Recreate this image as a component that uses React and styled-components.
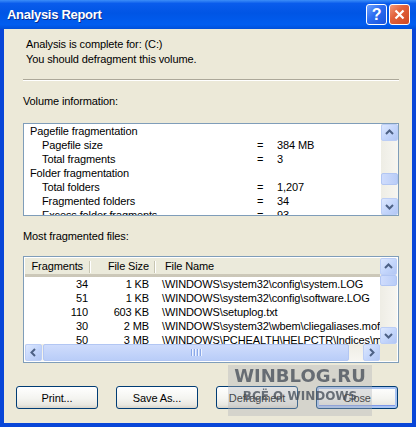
import React from 'react';
import styled, { createGlobalStyle } from 'styled-components';

const GlobalStyle = createGlobalStyle`
  html, body {
    margin: 0;
    padding: 0;
    background: #ffffff;
  }
  body {
    font-family: "Liberation Sans", Arial, sans-serif;
    font-size: 11px;
    letter-spacing: -0.12px;
    color: #000;
  }
`;

const Window = styled.div`
  position: relative;
  width: 416px;
  height: 427px;
  display: flex;
  flex-direction: column;
  background: #0846d8;
  overflow: hidden;
`;

const TitleBar = styled.div`
  height: 29px;
  flex: none;
  display: flex;
  align-items: center;
  padding: 0 6px 0 7px;
  background: linear-gradient(to bottom, #3c8ef8 0%, #0a5cec 12%, #0055e5 45%, #005df0 85%, #004fd9 100%);
`;

const Title = styled.span`
  flex: 1;
  color: #fff;
  font-weight: bold;
  font-size: 13px;
  letter-spacing: -0.3px;
  text-shadow: 1px 1px 0 #0a2c8c;
`;

const Controls = styled.div`
  display: flex;
  gap: 2px;
`;

const CaptionButton = styled.div`
  width: 21px;
  height: 21px;
  box-sizing: border-box;
  border: 1px solid #fff;
  border-radius: 3px;
  display: flex;
  align-items: center;
  justify-content: center;
  color: #fff;
  font-weight: bold;
  font-size: 16px;
  background: ${p => p.$close
    ? 'linear-gradient(135deg, #f29a7c 0%, #e2623c 40%, #cf4823 100%)'
    : 'linear-gradient(135deg, #6ea2ff 0%, #2c6cf0 45%, #1a54dc 100%)'};
`;

const Body = styled.div`
  flex: 1;
  margin: 0 4px 4px 4px;
  background: #ece9d8;
  padding: 8px 0 0 12px;
  display: flex;
  flex-direction: column;
`;

const Main = styled.div`
  padding-left: 7px;
  display: flex;
  flex-direction: column;
`;

const Message = styled.div`
  padding-left: 3px;
  line-height: 15px;
`;

const Separator = styled.div`
  width: 376px;
  height: 1px;
  margin-top: 12px;
  background: #aca899;
  border-bottom: 1px solid #fff;
`;

const Label = styled.div`
  line-height: 14px;
  margin-top: ${p => p.$top}px;
`;

const ListBox = styled.div`
  width: 376px;
  height: ${p => p.$height}px;
  box-sizing: border-box;
  margin-top: ${p => p.$top}px;
  border: 1px solid #7f9db9;
  background: #fff;
  display: grid;
  grid-template-columns: 1fr 17px;
  overflow: hidden;
`;

const InfoView = styled.div`
  padding-left: 6px;
  overflow: hidden;
`;

const InfoRow = styled.div`
  display: grid;
  grid-template-columns: 227px 20px 1fr;
  line-height: 14px;
  white-space: nowrap;
`;

const InfoName = styled.span`
  padding-left: ${p => (p.$item ? 12 : 0)}px;
`;

const VScroll = styled.div`
  display: flex;
  flex-direction: column;
  background: linear-gradient(to right, #eeede5, #f7f6f1);
`;

const HScroll = styled.div`
  display: flex;
  background: linear-gradient(to bottom, #eeede5, #f7f6f1);
`;

const ArrowButton = styled.div`
  width: 17px;
  height: 17px;
  flex: none;
  box-sizing: border-box;
  border: 1px solid #bccef6;
  border-radius: 2px;
  background: linear-gradient(135deg, #dde8fe 0%, #c3d5fb 55%, #b3c7f4 100%);
  display: flex;
  align-items: center;
  justify-content: center;
`;

const Track = styled.div`
  flex: 1;
  display: flex;
  flex-direction: ${p => (p.$horizontal ? 'row' : 'column')};
`;

const Thumb = styled.div`
  box-sizing: border-box;
  border: 1px solid #b2c6f3;
  border-radius: 2px;
  background: linear-gradient(${p => (p.$horizontal ? 'to bottom' : 'to right')}, #cfdcfc, #b9cdf8);
  display: flex;
  align-items: center;
  justify-content: center;
  gap: 1px;
  ${p => (p.$horizontal
    ? `width: ${p.$size}px; margin-left: 1px; height: 100%;`
    : `height: ${p.$size}px; margin-top: ${p.$offset}px;`)}
`;

const Grip = styled.span`
  width: 1px;
  height: 7px;
  background: #8aa8e8;
  box-shadow: 1px 0 0 #eef3fe;
  margin-right: 1px;
`;

const Corner = styled.div`
  background: #ece9d8;
`;

const ListView = styled(ListBox)`
  padding: 1px;
  grid-template-rows: 1fr 17px;
`;

const FileView = styled.div`
  overflow: hidden;
  display: flex;
  flex-direction: column;
`;

const Header = styled.div`
  height: 19px;
  flex: none;
  box-sizing: border-box;
  display: grid;
  grid-template-columns: 65px 65px 1fr;
  background: #ebeadb;
  border-bottom: 3px solid;
  border-image: linear-gradient(to bottom, #e2decd, #d6d2c2, #cbc7b8) 1;
`;

const HeadCell = styled.div`
  position: relative;
  line-height: 16px;
  text-align: ${p => p.$align};
  padding: ${p => (p.$align === 'right' ? `0 ${p.$pad}px 0 0` : `0 0 0 ${p.$pad}px`)};
  ${p => p.$divider && `
    &::after {
      content: '';
      position: absolute;
      right: 0;
      top: 3px;
      bottom: 1px;
      width: 1px;
      background: #c7c5b2;
      box-shadow: 1px 0 0 #fff;
    }
  `}
`;

const FileRow = styled.div`
  display: grid;
  grid-template-columns: 65px 65px 1fr;
  line-height: 14px;
  white-space: nowrap;
`;

const Cell = styled.span`
  text-align: ${p => p.$align};
  padding: ${p => (p.$align === 'right' ? `0 ${p.$pad}px 0 0` : `0 0 0 ${p.$pad}px`)};
  overflow: hidden;
`;

const ButtonRow = styled.div`
  display: flex;
  gap: 18px;
  margin-top: 23px;
`;

const Button = styled.div`
  width: 82px;
  height: 23px;
  box-sizing: border-box;
  border: 1px solid #003c74;
  border-radius: 3px;
  display: flex;
  align-items: center;
  justify-content: center;
  background: linear-gradient(to bottom, #ffffff 0%, #f4f4f0 55%, #e9e8e1 85%, #d8d4c9 100%);
  box-shadow: ${p => (p.$default ? 'inset 0 0 0 2px #a9c4f2, inset 0 -1px 0 2px #7d98ea' : 'none')};
`;

const Watermark = styled.div`
  position: absolute;
  left: 228px;
  top: 365px;
  width: 144px;
  height: 51px;
  background: rgba(175, 178, 185, 0.38);
  display: flex;
  flex-direction: column;
  align-items: center;
  font-family: "DejaVu Sans", sans-serif;
  font-weight: bold;
  letter-spacing: 0;
  color: rgba(70, 78, 90, 0.78);
  filter: blur(0.7px);
`;

const MarkBig = styled.div`
  font-size: 18px;
  line-height: 20px;
  margin-top: 1px;
`;

const MarkSmall = styled.div`
  font-size: 12px;
  line-height: 14px;
  margin-top: 3px;
`;

const Chevron = ({ dir }) => {
  const pts = {
    up: '4,9 7.5,5.5 11,9',
    down: '4,6 7.5,9.5 11,6',
    left: '9,4 5.5,7.5 9,11',
    right: '6,4 9.5,7.5 6,11',
  }[dir];
  return (
    <svg width="15" height="15" viewBox="0 0 15 15">
      <polyline points={pts} fill="none" stroke="#4d6185" strokeWidth="2" />
    </svg>
  );
};

const info = [
  { name: 'Pagefile fragmentation' },
  { name: 'Pagefile size', value: '384 MB', item: true },
  { name: 'Total fragments', value: '3', item: true },
  { name: 'Folder fragmentation' },
  { name: 'Total folders', value: '1,207', item: true },
  { name: 'Fragmented folders', value: '34', item: true },
  { name: 'Excess folder fragments', value: '93', item: true },
];

const files = [
  ['34', '1 KB', '\\WINDOWS\\system32\\config\\system.LOG'],
  ['51', '1 KB', '\\WINDOWS\\system32\\config\\software.LOG'],
  ['110', '603 KB', '\\WINDOWS\\setuplog.txt'],
  ['30', '2 MB', '\\WINDOWS\\system32\\wbem\\cliegaliases.mof'],
  ['50', '3 MB', '\\WINDOWS\\PCHEALTH\\HELPCTR\\Indices\\me...'],
];

export default function App() {
  return (
    <>
      <GlobalStyle />
      <Window>
        <TitleBar>
          <Title>Analysis Report</Title>
          <Controls>
            <CaptionButton>?</CaptionButton>
            <CaptionButton $close>
              <svg width="13" height="13" viewBox="0 0 13 13">
                <path d="M2.5 2.5 L10.5 10.5 M10.5 2.5 L2.5 10.5" stroke="#fff" strokeWidth="2.2" />
              </svg>
            </CaptionButton>
          </Controls>
        </TitleBar>
        <Body>
          <Main>
            <Message>
              Analysis is complete for: (C:)<br />
              You should defragment this volume.
            </Message>
            <Separator />
            <Label $top={13}>Volume information:</Label>
            <ListBox $top={15} $height={93}>
              <InfoView>
                {info.map(r => (
                  <InfoRow key={r.name}>
                    <InfoName $item={r.item}>{r.name}</InfoName>
                    <span>{r.value ? '=' : ''}</span>
                    <span>{r.value}</span>
                  </InfoRow>
                ))}
              </InfoView>
              <VScroll>
                <ArrowButton><Chevron dir="up" /></ArrowButton>
                <Track>
                  <Thumb $size={12} $offset={32} />
                </Track>
                <ArrowButton><Chevron dir="down" /></ArrowButton>
              </VScroll>
            </ListBox>
            <Label $top={13}>Most fragmented files:</Label>
            <ListView $top={13} $height={107}>
              <FileView>
                <Header>
                  <HeadCell $align="right" $pad={7} $divider>Fragments</HeadCell>
                  <HeadCell $align="right" $pad={6} $divider>File Size</HeadCell>
                  <HeadCell $align="left" $pad={10}>File Name</HeadCell>
                </Header>
                {files.map(f => (
                  <FileRow key={f[2]}>
                    <Cell $align="right" $pad={2}>{f[0]}</Cell>
                    <Cell $align="right" $pad={6}>{f[1]}</Cell>
                    <Cell $align="left" $pad={7}>{f[2]}</Cell>
                  </FileRow>
                ))}
              </FileView>
              <VScroll>
                <ArrowButton><Chevron dir="up" /></ArrowButton>
                <Track>
                  <Thumb $size={11} $offset={0} />
                </Track>
                <ArrowButton><Chevron dir="down" /></ArrowButton>
              </VScroll>
              <HScroll>
                <ArrowButton><Chevron dir="left" /></ArrowButton>
                <Track $horizontal>
                  <Thumb $horizontal $size={306}>
                    <Grip /><Grip /><Grip /><Grip />
                  </Thumb>
                </Track>
                <ArrowButton><Chevron dir="right" /></ArrowButton>
              </HScroll>
              <Corner />
            </ListView>
          </Main>
          <ButtonRow>
            <Button>Print...</Button>
            <Button>Save As...</Button>
            <Button>Defragment</Button>
            <Button $default>Close</Button>
          </ButtonRow>
        </Body>
        <Watermark>
          <MarkBig>WINBLOG.RU</MarkBig>
          <MarkSmall>ВСЁ О WINDOWS</MarkSmall>
        </Watermark>
      </Window>
    </>
  );
}
